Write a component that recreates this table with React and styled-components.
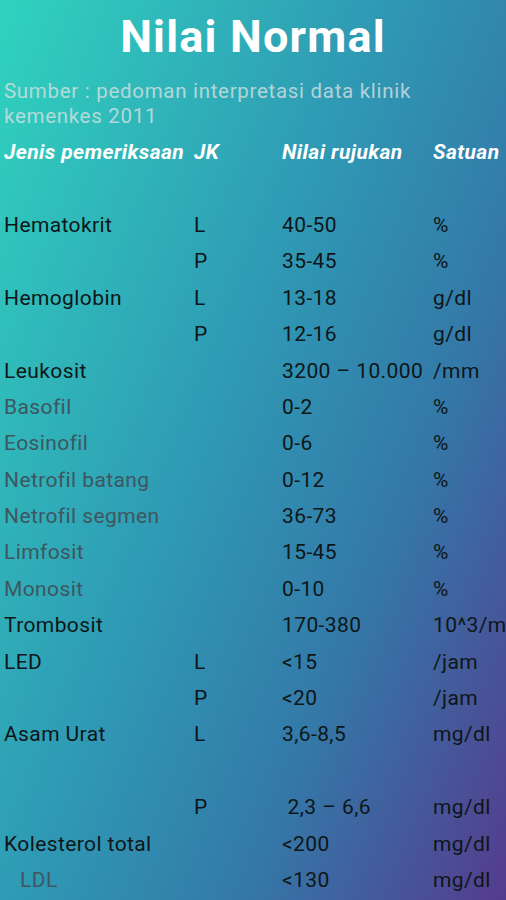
import styled, { createGlobalStyle } from "styled-components";

const GlobalStyle = createGlobalStyle`
  html, body {
    margin: 0;
    padding: 0;
  }
  body {
    font-family: Roboto, "Noto Sans", sans-serif;
  }
`

const Screen = styled.div`
  width: 506px;
  height: 900px;
  overflow: hidden;
  background: linear-gradient(112deg, #30d3bf 0%, #2f98b4 45%, #3478a8 70%, #553b8d 100%);
  box-sizing: border-box;
`

const Title = styled.h1`
  margin: 0;
  padding-top: 10px;
  height: 69px;
  text-align: center;
  color: #ffffff;
  font-size: 45px;
  font-weight: 700;
  letter-spacing: 1.2px;
  line-height: 54px;
`

const Source = styled.p`
  margin: 0;
  padding: 0 4px;
  color: rgba(215, 225, 225, 0.8);
  font-size: 20.5px;
  line-height: 25px;
  letter-spacing: 0.7px;
  width: 440px;
`

const Table = styled.div`
  display: grid;
  grid-template-columns: 190px 88px 151px 1fr;
  grid-auto-rows: 36.4px;
  padding-left: 4px;
  margin-top: 5px;
`

const Cell = styled.div`
  display: flex;
  align-items: center;
  white-space: nowrap;
  font-size: 21px;
  letter-spacing: 0.4px;
  color: ${(p) => (p.$sub ? "#3e5660" : "#0e1618")};
  padding-left: ${(p) => (p.$indent ? "16px" : "0")};
`

const HeadCell = styled(Cell)`
  color: #ffffff;
  font-weight: 700;
  font-style: italic;
  font-size: 21px;
  letter-spacing: 0.4px;
`

const rows = [
  ["", "", "", ""],
  ["Hematokrit", "L", "40-50", "%"],
  ["", "P", "35-45", "%"],
  ["Hemoglobin", "L", "13-18", "g/dl"],
  ["", "P", "12-16", "g/dl"],
  ["Leukosit", "", "3200 – 10.000", "/mm"],
  ["Basofil", "", "0-2", "%", true],
  ["Eosinofil", "", "0-6", "%", true],
  ["Netrofil batang", "", "0-12", "%", true],
  ["Netrofil segmen", "", "36-73", "%", true],
  ["Limfosit", "", "15-45", "%", true],
  ["Monosit", "", "0-10", "%", true],
  ["Trombosit", "", "170-380", "10^3/mm"],
  ["LED", "L", "<15", "/jam"],
  ["", "P", "<20", "/jam"],
  ["Asam Urat", "L", "3,6-8,5", "mg/dl"],
  ["", "", "", ""],
  ["", "P", "\u00a02,3 – 6,6", "mg/dl"],
  ["Kolesterol total", "", "<200", "mg/dl"],
  ["LDL", "", "<130", "mg/dl", true, true],
]

export default function App() {
  return (
    <Screen>
      <GlobalStyle />
      <Title>Nilai Normal</Title>
      <Source>Sumber : pedoman interpretasi data klinik kemenkes 2011</Source>
      <Table>
        <HeadCell>Jenis pemeriksaan</HeadCell>
        <HeadCell>JK</HeadCell>
        <HeadCell>Nilai rujukan</HeadCell>
        <HeadCell>Satuan</HeadCell>
        {rows.map(([name, jk, value, unit, sub, indent], i) => (
          <>
            <Cell key={`n${i}`} $sub={sub} $indent={indent}>{name}</Cell>
            <Cell key={`j${i}`}>{jk}</Cell>
            <Cell key={`v${i}`}>{value}</Cell>
            <Cell key={`u${i}`}>{unit}</Cell>
          </>
        ))}
      </Table>
    </Screen>
  )
}
